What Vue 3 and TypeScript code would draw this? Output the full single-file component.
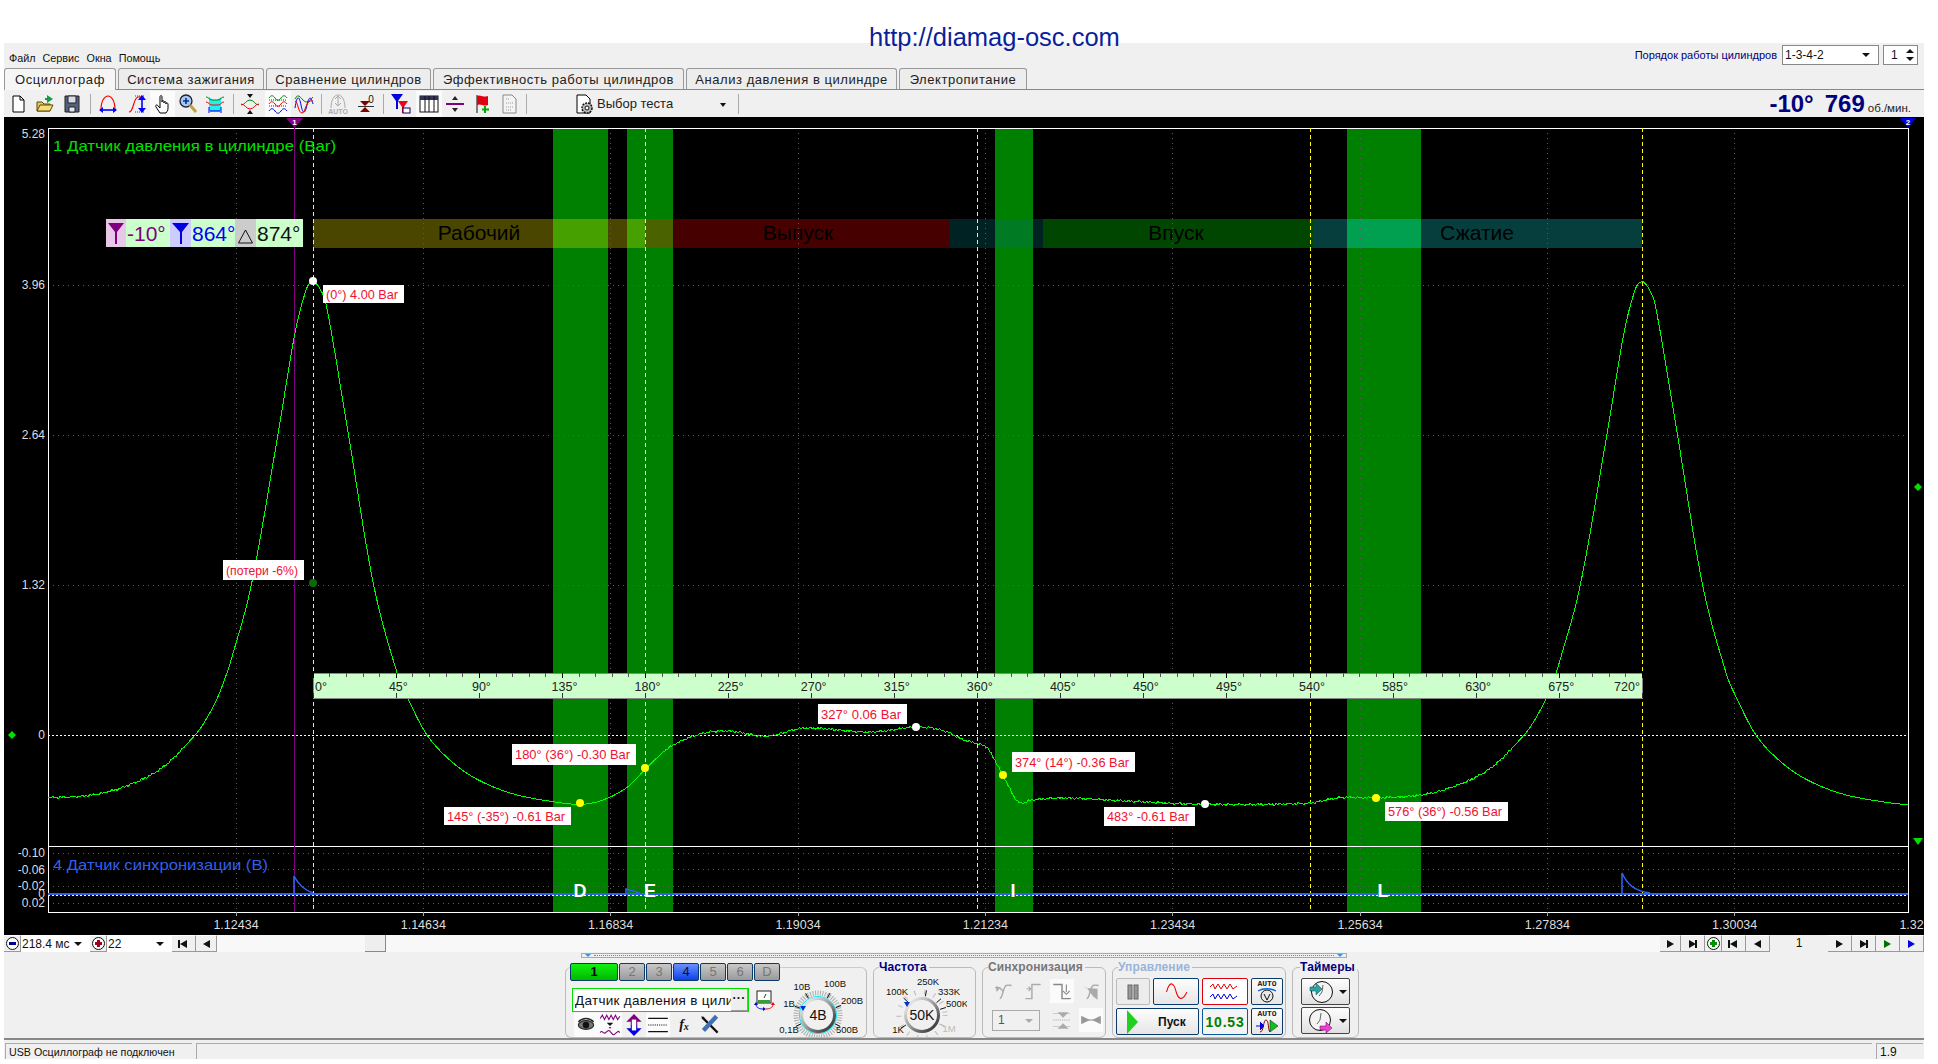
<script setup lang="ts">
// pressure table: crank degree -> Bar, read off the reference
const knots: [number, number][] = [
  [0, 4], [3.5, 3.93], [7.2, 3.77], [19, 2.647], [32.5, 1.335], [45.2, 0.557], [51, 0.33], [61.6, 0],
  [75, -0.235], [89.5, -0.396], [108.7, -0.52], [130, -0.587], [145, -0.61], [157, -0.572], [170.5, -0.455],
  [180, -0.3], [193, -0.108], [210, 0.01], [225, 0.035], [245.5, -0.01], [266, 0.06], [302, 0.026], [327, 0.07],
  [341, 0.04], [352, -0.04], [360.5, -0.08], [365, -0.11], [373.5, -0.35], [381.8, -0.587], [389, -0.572],
  [408, -0.555], [447, -0.587], [483, -0.61], [539, -0.6], [556, -0.552], [576, -0.552], [600, -0.528],
  [618.7, -0.449], [638, -0.29], [656, 0], [662, 0.14], [668, 0.326], [672.2, 0.5], [676, 0.69], [686.6, 1.335], [701, 2.66],
  [710.1, 3.54], [716.4, 3.93], [720, 4],
]
const X0 = 313.3
const PX_DEG = 1.8458
const Y0 = 735
const PX_BAR = 113.6

function slope(i: number) {
  const a = knots[Math.max(i - 1, 0)]
  const b = knots[Math.min(i + 1, knots.length - 1)]
  return (b[1] - a[1]) / (b[0] - a[0])
}
function bar(deg: number) {
  let i = 0
  while (i < knots.length - 2 && knots[i + 1][0] < deg) i++
  const [x1, y1] = knots[i]
  const [x2, y2] = knots[i + 1]
  const h = x2 - x1
  const t = (deg - x1) / h
  const t2 = t * t
  const t3 = t2 * t
  return (2 * t3 - 3 * t2 + 1) * y1 + (t3 - 2 * t2 + t) * h * slope(i) + (-2 * t3 + 3 * t2) * y2 + (t3 - t2) * h * slope(i + 1)
}
function buildCurve() {
  const pts: string[] = []
  for (let x = 48; x <= 1908; x++) {
    const deg = (((x - X0) / PX_DEG) % 720 + 720) % 720
    const wiggle = deg > 190 && deg < 650 ? 0.006 * Math.sin(x * 1.7) + 0.004 * Math.sin(x * 0.63) : 0
    pts.push(`${x},${(Y0 - (bar(deg) + wiggle) * PX_BAR).toFixed(1)}`)
  }
  return pts.join(' ')
}
const curve = buildCurve()

const greenBars = [[553, 55], [627, 46], [995, 38], [1347, 74]]
const bands = [
  { x: 313, w: 332, fill: '#4a4600', text: 'Рабочий', cx: 479 },
  { x: 645, w: 304, fill: '#470000', text: 'Выпуск', cx: 798 },
  { x: 949, w: 94, fill: '#002222', text: '', cx: 0 },
  { x: 1043, w: 270, fill: '#004500', text: 'Впуск', cx: 1176 },
  { x: 1313, w: 329, fill: '#063e3e', text: 'Сжатие', cx: 1477 },
]
const overlaps = [
  { x: 553, w: 55, fill: '#46a000' },
  { x: 627, w: 18, fill: '#46a000' },
  { x: 645, w: 28, fill: '#4a6200' },
  { x: 995, w: 38, fill: '#007b24' },
  { x: 1347, w: 74, fill: '#00a050' },
]
const gridX = [236, 423.3, 610.7, 798, 985.4, 1172.7, 1360, 1547.4, 1734.7]
const timeLabels = ['1.12434', '1.14634', '1.16834', '1.19034', '1.21234', '1.23434', '1.25634', '1.27834', '1.30034']
const yLabels = [
  { y: 134, t: '5.28' }, { y: 285, t: '3.96' }, { y: 435, t: '2.64' }, { y: 585, t: '1.32' }, { y: 735, t: '0' },
  { y: 853, t: '-0.10' }, { y: 869.5, t: '-0.06' }, { y: 886, t: '-0.02' }, { y: 894, t: '0' }, { y: 903, t: '0.02' },
]
const yellow = [313, 645, 977.5, 1310, 1642]
const ticks = Array.from({ length: 81 }, (_, i) => X0 + i * 9 * PX_DEG)
const rulerMarks = Array.from({ length: 17 }, (_, i) => i * 45)
const labels = [
  { x: 323, y: 285, w: 81, h: 18, t: '(0°) 4.00 Bar' },
  { x: 223, y: 560, w: 81, h: 20, t: '(потери -6%)' },
  { x: 512, y: 744, w: 124, h: 21, t: '180° (36°) -0.30 Bar' },
  { x: 444, y: 807, w: 127, h: 18, t: '145° (-35°) -0.61 Bar' },
  { x: 818, y: 704, w: 89, h: 20, t: '327° 0.06 Bar' },
  { x: 1012, y: 752, w: 123, h: 20, t: '374° (14°) -0.36 Bar' },
  { x: 1104, y: 807, w: 91, h: 19, t: '483° -0.61 Bar' },
  { x: 1385, y: 802, w: 123, h: 19, t: '576° (36°) -0.56 Bar' },
]
const dots = [
  { x: 313, y: 281, f: '#fff' }, { x: 313, y: 583, f: '#0a6a0a' }, { x: 580, y: 803, f: '#ff0' },
  { x: 645, y: 768, f: '#ff0' }, { x: 916, y: 727, f: '#fff' }, { x: 1003, y: 775, f: '#ff0' },
  { x: 1205, y: 804, f: '#fff' }, { x: 1376, y: 798, f: '#ff0' },
]

const tabs = [
  { t: 'Осциллограф', w: 112 }, { t: 'Система зажигания', w: 146 }, { t: 'Сравнение цилиндров', w: 165 },
  { t: 'Эффективность работы цилиндров', w: 251 }, { t: 'Анализ давления в цилиндре', w: 211 }, { t: 'Электропитание', w: 128 },
]

const icons: Record<string, string> = {
  new: '<path d="M6 3h7l4 4v12H6z" fill="#fff" stroke="#000"/><path d="M13 3v4h4" fill="none" stroke="#000"/>',
  open: '<path d="M3 18V9h5l2 2h6v7z" fill="#e8c860" stroke="#5a4a00"/><path d="M3 18l3-6h13l-3 6z" fill="#f4dc80" stroke="#5a4a00"/><path d="M13 2l6 4-6 4V7h-2V5h2z" fill="#10a040"/>',
  save: '<path d="M4 3h14v16H4z" fill="#556080" stroke="#222"/><path d="M7 3h8v7H7z" fill="#d8dce8" stroke="#222"/><path d="M8 14h6v5H8z" fill="#e8e8e8" stroke="#222"/>',
  arch: '<path d="M4 17C4 7 8 3 11 3s7 4 7 14" fill="none" stroke="#f00" stroke-width="1.2"/><path d="M5 17h12" stroke="#00f" stroke-width="1.6"/><path d="M2 17l4-3v6zM20 17l-4-3v6z" fill="#00f"/>',
  scurve: '<path d="M2 19c5 0 4-14 9-15h5" fill="none" stroke="#f00" stroke-width="1.2"/><path d="M8 3h10M8 19h10" stroke="#444" stroke-dasharray="1 1"/><path d="M15 6v11" stroke="#00f" stroke-width="1.6"/><path d="M15 2l4 5h-8zM15 20l4-5h-8z" fill="#00f"/>',
  hand: '<path d="M8 20l-4-6c-1-2 1-3 2-1l2 2V4c0-2 2-2 2 0v5c0-2 2-2 2 0v1c0-2 2-2 2 0v1c0-2 2-1 2 0v4c0 3-1 3-2 5z" fill="#fff" stroke="#000"/>',
  zoom: '<circle cx="9" cy="8" r="6" fill="#a8c8f0" stroke="#223"  stroke-width="1.3"/><path d="M6 8h6M9 5v6" stroke="#0030a0" stroke-width="1.6"/><path d="M13 12l6 7" stroke="#c0a040" stroke-width="3"/>',
  band: '<path d="M5 4l4 3h4l4-3v14H5z" fill="#20f0f0"/><path d="M2 4c3 0 3 3 6 3h6c3 0 3-3 6-3" fill="none" stroke="#080" /><path d="M2 9c3 0 3 3 6 3h6c3 0 3-3 6-3" fill="none" stroke="#f00"/><path d="M6 18h10" stroke="#00f" stroke-width="1.2"/><path d="M5 14v6M17 14v6" stroke="#00f"/>',
  cross: '<path d="M2 11c4 0 5-5 9-5s5 5 9 5" fill="none" stroke="#080" transform="translate(0 1)"/><path d="M2 11c4 0 5 5 9 5s5-5 9-5" fill="none" stroke="#e00"/><path d="M8 1h6l-3 4zM8 21h6l-3-4z" fill="#111"/>',
  waves: '<path d="M2 5c2-3 4-3 6 0s4 3 6 0 4-3 6 0" fill="none" stroke="#080"/><path d="M2 11c2-3 4-3 6 0s4 3 6 0 4-3 6 0" fill="none" stroke="#e00"/><path d="M2 18c2-3 4-3 6 0s4 3 6 0 4-3 6 0" fill="none" stroke="#00d"/><path d="M2 7h18M2 13h18" stroke="#333" stroke-dasharray="1 1"/>',
  sines: '<path d="M2 6c3-6 5-2 8 1s5 3 10-3" fill="none" stroke="#080"/><path d="M2 15C4 2 6 2 8 12s4 9 6 0 4-9 6-1" fill="none" stroke="#00d"/><path d="M2 8c3 0 3 12 7 12s3-14 11-12" fill="none" stroke="#e00"/>',
  auto: '<path d="M4 15C4 7 7 2 11 2s7 5 7 13" fill="none" stroke="#aaa"/><path d="M11 4v8" stroke="#aaa"/><path d="M8 6l3-3 3 3M8 10l3 3 3-3" fill="none" stroke="#aaa"/><text x="11" y="21" text-anchor="middle" font-family="Liberation Sans" font-size="7" font-weight="700" fill="#aaa">AUTO</text>',
  zero: '<path d="M5 8h10l-5 5zM5 19h10l-5-5z" fill="#800000"/><path d="M3 11h16" stroke="#333" transform="translate(0 2.5)"/><text x="16" y="10" text-anchor="middle" font-family="Liberation Sans" font-size="10" fill="#111">0</text>',
  cursors: '<path d="M2 1h12L9 8v8H7V8z" fill="#0000e0"/><path d="M9 8h10l-4 6v6h-2v-6z" fill="#f00020"/><rect x="14" y="15" width="7" height="5" fill="#fff" stroke="#005"/>',
  table: '<rect x="2" y="3" width="18" height="16" fill="#fff" stroke="#111"/><path d="M2 3h18v4H2z" fill="#335"/><path d="M7 3v16M11 3v16M16 3v16" stroke="#111"/>',
  level: '<path d="M2 11h18" stroke="#800080" stroke-width="2"/><path d="M8 7h6l-3-4zM8 15h6l-3 4z" fill="#222"/>',
  flag: '<path d="M6 2v18" stroke="#111"/><path d="M6 3c4-2 5 2 11 0v9c-5 2-7-2-11 0z" fill="#e00010"/><path d="M14 13v7M11 16.500h7" stroke="#0a0" stroke-width="2"/>',
  doc: '<path d="M5 2h9l4 4v14H5z" fill="#f4f4f4" stroke="#888"/><path d="M8 6h4M8 10h7M8 14h7M8 17h5" stroke="#999" stroke-dasharray="1 1"/>',
  test: '<path d="M4 2h9l4 4v14H4z" fill="#fff" stroke="#000"/><circle cx="14" cy="15" r="5" fill="#bbb" stroke="#111" stroke-dasharray="2 1" stroke-width="1.5"/><circle cx="14" cy="15" r="2" fill="#fff" stroke="#111"/>',
  eye: '<ellipse cx="11" cy="11" rx="7" ry="4" fill="#777" stroke="#222"/><circle cx="11" cy="11" r="3" fill="#111"/><path d="M4 8c4-4 10-4 14 0" fill="none" stroke="#222" stroke-width="1.5"/>',
  scale: '<path d="M2 5l2-3 2 4 2-4 2 4 2-4 2 4 2-4 2 4 2-3" fill="none" stroke="#800080"/><path d="M2 18c2-3 3 2 5 0s3-3 5 0 3 2 5 0 2-1 3 0" fill="none" stroke="#800080"/><path d="M8 9h6l-3 3zM10 13h2v1h-2z" fill="#111"/>',
  updown: '<path d="M11 1l7 7h-4v3H8V8H4z" fill="#800080"/><path d="M11 21l7-7h-4v-3H8v3H4z" fill="#0000e0"/><path d="M9 6h4v10H9z" fill="#fff"/>',
  lines: '<path d="M2 5h18M2 17h18" stroke="#111" stroke-width="1.2"/><path d="M2 11h18" stroke="#111" stroke-dasharray="1 1"/>',
  tools: '<path d="M4 4l14 14" stroke="#111" stroke-width="2"/><path d="M17 3L5 16" stroke="#4070b0" stroke-width="4"/><path d="M3 3l3 1-2 2z" fill="#111"/>',
  gauge: '<rect x="4" y="2" width="14" height="12" fill="#fff" stroke="#222"/><path d="M5 11h12v3H5z" fill="#3a9a3a"/><path d="M11 9l2-4" stroke="#333"/><path d="M3 15c0 4 4 5 7 5" fill="none" stroke="#00c"/><path d="M20 15c0 4-4 5-7 5" fill="none" stroke="#e00"/><path d="M1 16h4l-2-3zM10 18v4l3-2z" fill="#00c"/><path d="M18 16h4l-2-3z" fill="#e00"/>',
  sine: '<path d="M3 11C7-2 12 3 14 10s7 12 13 1" transform="scale(.85 1)" fill="none" stroke="#e00" stroke-width="1.2"/>',
  pause: '<rect x="6" y="4" width="4" height="14" fill="#999" stroke="#666"/><rect x="12" y="4" width="4" height="14" fill="#999" stroke="#666"/>',
  syncA: '<path d="M3 8h4l3 3M7 18c3 0 3-11 6-12s3 0 5 0" fill="none" stroke="#aaa" stroke-width="1.3"/><path d="M4 6l3 3-3 3z" fill="#aaa"/>',
  syncB: '<path d="M4 18h6V5h8" fill="none" stroke="#aaa" stroke-width="1.3"/><path d="M5 9h4M7 7l2 2-2 2" fill="none" stroke="#aaa"/>',
  syncC: '<path d="M3 5h8v13h8" fill="none" stroke="#888" stroke-width="1.3"/><path d="M15 5v7M12 11l3 3 3-3" fill="none" stroke="#888"/>',
  syncD: '<path d="M3 8h4l6 8 4 3V9z" fill="#aaa"/><path d="M7 18c3 0 3-11 6-12s3 0 5 0" fill="none" stroke="#aaa" stroke-width="1.3"/>',
  syncE: '<path d="M3 5h15M3 11h15M3 17h15" stroke="#aaa" stroke-dasharray="1 1"/><path d="M7 4h10l-5 5zM7 19h10l-5-5z" fill="#aaa"/>',
  syncF: '<path d="M2 7l8 4-8 4zM20 7l-8 4 8 4z" fill="#999"/><path d="M2 11h18" stroke="#999"/>',
}

const toolbar = [
  { i: 'new', w: 26 }, { i: 'open', w: 27 }, { i: 'save', w: 27 }, { i: '', w: 10 },
  { i: 'arch', w: 25 }, { i: '', w: 5 }, { i: 'scurve', w: 25 }, { i: 'hand', w: 25, on: true }, { i: 'zoom', w: 25 }, { i: '', w: 2 }, { i: 'band', w: 26 },
  { i: '', w: 9 }, { i: 'cross', w: 26 }, { i: '', w: 2 }, { i: 'waves', w: 26, on: true }, { i: 'sines', w: 26 }, { i: '', w: 8 },
  { i: 'auto', w: 26 }, { i: '', w: 2 }, { i: 'zero', w: 26 }, { i: '', w: 8 }, { i: 'cursors', w: 26 }, { i: '', w: 3 },
  { i: 'table', w: 26, on: true }, { i: 'level', w: 26 }, { i: 'flag', w: 27 }, { i: 'doc', w: 27 }, { i: '', w: 8 },
]
const channels = [
  { t: '1', c: 'on' }, { t: '2', c: '' }, { t: '3', c: '' }, { t: '4', c: 'blue' }, { t: '5', c: '' }, { t: '6', c: '' }, { t: 'D', c: '' },
]
const knobA = [
  { x: -29, y: 15, t: '0,1В' }, { x: -29, y: -11, t: '1В' }, { x: -16, y: -28, t: '10В' },
  { x: 17, y: -31, t: '100В' }, { x: 34, y: -14, t: '200В' }, { x: 29, y: 15, t: '500В' },
]
const knobB = [
  { x: -24, y: 15, t: '1K', g: false }, { x: -25, y: -23, t: '100K', g: false }, { x: 6, y: -33, t: '250K', g: false },
  { x: 27, y: -23, t: '333K', g: false }, { x: 35, y: -11, t: '500K', g: false }, { x: 27, y: 14, t: '1M', g: true },
]
// short radial mark between the dial ring and its caption
function knobTick(k: { x: number; y: number }) {
  const len = Math.hypot(k.x, k.y)
  const ux = k.x / len
  const uy = k.y / len
  return { x1: ux * 19, y1: uy * 19, x2: ux * 25, y2: uy * 25 }
}
</script>

<template>
  <div class="title">http://diamag-osc.com</div>
  <div class="app">
    <div class="menubar">
      <span>Файл</span><span>Сервис</span><span>Окна</span><span>Помощь</span>
      <div class="cyl">
        <span class="cyl-label">Порядок работы цилиндров</span>
        <div class="cyl-select">1-3-4-2<i class="down"></i></div>
        <div class="cyl-spin">1<b><i class="up"></i><i class="down"></i></b></div>
      </div>
    </div>

    <div class="tabs">
      <div v-for="(t, i) in tabs" :key="t.t" class="tab" :class="{ active: i === 0 }" :style="{ width: t.w + 'px' }">{{ t.t }}</div>
    </div>

    <div class="toolbar">
      <template v-for="(b, i) in toolbar" :key="i">
        <div v-if="b.i" class="tool" :class="{ on: b.on }" :style="{ width: b.w + 'px' }">
          <svg width="22" height="22" viewBox="0 0 22 22" v-html="icons[b.i]"></svg>
        </div>
        <div v-else class="gap" :class="{ sep: b.w > 6 }" :style="{ width: b.w + 'px' }"></div>
      </template>
      <div class="test">
        <svg width="22" height="22" viewBox="0 0 22 22" v-html="icons.test"></svg>
        <span>Выбор теста</span>
        <i class="down"></i>
      </div>
      <div class="gap sep test-sep"></div>
      <div class="rpm"><b>-10°</b><b class="rpm-val">769</b><span>об./мин.</span></div>
    </div>

    <svg class="chart" width="1920" height="818" viewBox="4 117 1920 818" font-family="Liberation Sans, Arial, sans-serif">
      <rect x="4" y="117" width="1920" height="818" fill="#000" />
      <rect v-for="g in greenBars" :key="g[0]" :x="g[0]" y="128" :width="g[1]" height="784" fill="#008000" />

      <rect v-for="b in bands" :key="b.x" :x="b.x" y="219" :width="b.w" height="29" :fill="b.fill" />
      <rect v-for="o in overlaps" :key="o.x" :x="o.x" y="219" :width="o.w" height="29" :fill="o.fill" />
      <template v-for="b in bands" :key="b.x">
        <text v-if="b.text" :x="b.cx" y="240" text-anchor="middle" font-size="21" fill="#000">{{ b.text }}</text>
      </template>

      <g stroke="#5c5c5c" stroke-dasharray="1 4" shape-rendering="crispEdges">
        <line v-for="x in gridX" :key="x" :x1="x" :x2="x" y1="128" y2="912" />
        <line x1="48" x2="1908" y1="285" y2="285" />
        <line x1="48" x2="1908" y1="435" y2="435" />
        <line x1="48" x2="1908" y1="585" y2="585" />
        <line x1="48" x2="1908" y1="853" y2="853" />
        <line x1="48" x2="1908" y1="869.500" y2="869.500" />
        <line x1="48" x2="1908" y1="886" y2="886" />
        <line x1="48" x2="1908" y1="903" y2="903" />
      </g>
      <line x1="48" x2="1908" y1="735" y2="735" stroke="#fff" stroke-dasharray="2 2" shape-rendering="crispEdges" />
      <line x1="48" x2="1908" y1="895" y2="895" stroke="#fff" stroke-dasharray="2 2" shape-rendering="crispEdges" />

      <rect x="48" y="128" width="1860" height="784" fill="none" stroke="#fff" shape-rendering="crispEdges" />
      <line x1="48" x2="1908" y1="846" y2="846" stroke="#fff" shape-rendering="crispEdges" />

      <line v-for="x in yellow" :key="x" :x1="x" :x2="x" y1="128" y2="912" stroke="#ff0" stroke-dasharray="4 3" shape-rendering="crispEdges" />
      <line x1="294.500" x2="294.500" y1="128" y2="912" stroke="#800080" shape-rendering="crispEdges" />

      <polygon points="286,118 303,118 294.500,128" fill="#800080" />
      <text x="294.500" y="125" text-anchor="middle" font-size="8" font-weight="700" fill="#fff">1</text>
      <polygon points="1900,118 1916,118 1908,128" fill="#0000e0" />
      <text x="1908" y="125" text-anchor="middle" font-size="8" font-weight="700" fill="#fff">2</text>

      <polyline :points="curve" fill="none" stroke="#00ff00" shape-rendering="crispEdges" />

      <path d="M294 894V876C298 884 304 890 313 893M626 893V889L640 893M1622 893V873C1627 884 1634 891 1650 893" fill="none" stroke="#2f5fef" stroke-width="1.600" />
      <path d="M48 894H1908" stroke="#2f5fef" stroke-width="2" />

      <text x="53" y="151" font-size="15" fill="#00e000" textLength="283" lengthAdjust="spacingAndGlyphs">1 Датчик давления в цилиндре (Bar)</text>
      <text x="53" y="870" font-size="15" fill="#2f5fef" textLength="215" lengthAdjust="spacingAndGlyphs">4 Датчик синхронизации (В)</text>

      <g font-size="18" font-weight="700" fill="#fff" text-anchor="middle">
        <text x="580" y="897">D</text>
        <text x="650" y="897">E</text>
        <text x="1013" y="897">I</text>
        <text x="1383" y="897">L</text>
      </g>

      <!-- degree ruler -->
      <rect x="313" y="673" width="1329" height="25" fill="#ccffcc" stroke="#888" shape-rendering="crispEdges" />
      <g stroke="#555" shape-rendering="crispEdges">
        <line v-for="x in ticks" :key="x" :x1="x" :x2="x" y1="673" y2="677" />
      </g>
      <g v-for="d in rulerMarks" :key="d">
        <line :x1="X0 + d * PX_DEG" :x2="X0 + d * PX_DEG" y1="673" y2="678" stroke="#000" shape-rendering="crispEdges" />
        <line :x1="X0 + d * PX_DEG" :x2="X0 + d * PX_DEG" y1="693" y2="698" stroke="#333" shape-rendering="crispEdges" />
        <text :x="d === 0 ? 321 : d === 720 ? 1627 : X0 + d * PX_DEG + 2" y="691" text-anchor="middle" font-size="12.500" fill="#222">{{ d }}°</text>
      </g>

      <g v-for="l in labels" :key="l.t">
        <rect :x="l.x" :y="l.y" :width="l.w" :height="l.h" fill="#fff" />
        <text :x="l.x + 3" :y="l.y + l.h / 2 + 4.500" font-size="13" fill="#f01030" :textLength="l.w - 9" lengthAdjust="spacingAndGlyphs">{{ l.t }}</text>
      </g>
      <circle v-for="d in dots" :key="d.x + d.f" :cx="d.x" :cy="d.y" r="4" :fill="d.f" />

      <!-- cursor legend -->
      <rect x="106" y="219" width="20" height="28" fill="#e8c8e8" />
      <rect x="126" y="219" width="44" height="28" fill="#ccffcc" />
      <rect x="170" y="219" width="21" height="28" fill="#ccccff" />
      <rect x="191" y="219" width="44" height="28" fill="#ccffcc" />
      <rect x="235" y="219" width="21" height="28" fill="#cccccc" />
      <rect x="256" y="219" width="47" height="28" fill="#ccffcc" />
      <path d="M108 223h16l-7 9v12h-2v-12z" fill="#800080" />
      <path d="M172 223h17l-7 9v12h-2v-12z" fill="#0000e0" />
      <path d="M245.500 230l7 13h-14z" fill="none" stroke="#111" />
      <g font-size="21">
        <text x="127" y="241" fill="#800080">-10°</text>
        <text x="192" y="241" fill="#0000ff">864°</text>
        <text x="257" y="241" fill="#111">874°</text>
      </g>

      <g font-size="12" fill="#ddd" text-anchor="end">
        <text v-for="y in yLabels" :key="y.t + y.y" x="45" :y="y.y + 4">{{ y.t }}</text>
      </g>
      <g font-size="12.500" fill="#ddd" text-anchor="middle">
        <text v-for="(t, i) in timeLabels" :key="t" :x="gridX[i]" y="929">{{ t }}</text>
        <text x="1922" y="929">1.32234</text>
      </g>
      <g stroke="#aaa" shape-rendering="crispEdges">
        <line v-for="x in gridX" :key="x" :x1="x" :x2="x" y1="912" y2="916" />
      </g>

      <path d="M12 731l4 4-4 4-4-4z" fill="#00e000" />
      <path d="M1918 483l4 4-4 4-4-4z" fill="#00e000" />
      <path d="M1913 838h10l-5 7z" fill="#00e000" />
    </svg>

    <div class="scrollrow">
      <div class="btn small"><span class="round minus"></span></div>
      <div class="combo-mini w1">218.4 мс<i class="down"></i></div>
      <div class="btn small"><span class="round plus-r"></span></div>
      <div class="combo-mini w2">22<i class="down"></i></div>
      <div class="btn nav"><i class="tri-l bar-l"></i></div>
      <div class="btn n2"><i class="tri-l"></i></div>
      <div class="track"><div class="thumb"></div></div>
      <div class="btn n2"><i class="tri-r"></i></div>
      <div class="btn nav"><i class="tri-r bar-r"></i></div>
      <div class="btn small"><span class="round plus-g"></span></div>
      <div class="btn nav"><i class="tri-l bar-l"></i></div>
      <div class="btn nav"><i class="tri-l"></i></div>
      <div class="page">1</div>
      <div class="btn nav"><i class="tri-r"></i></div>
      <div class="btn nav"><i class="tri-r bar-r"></i></div>
      <div class="btn nav"><i class="tri-r green"></i></div>
      <div class="btn nav"><i class="tri-r blue"></i></div>
    </div>

    <div class="bottom">
      <div class="slider"><i class="mark"></i><span class="dots"></span><i class="mark"></i></div>
      <div class="groups">
        <section class="group g-channel">
          <div class="col">
            <div class="chans">
              <div v-for="c in channels" :key="c.t" class="chan" :class="c.c">{{ c.t }}</div>
            </div>
            <div class="sensor">
              <div class="sensor-box"><span>Датчик давления в цилиндре</span><em>···</em></div>
              <svg width="22" height="22" viewBox="0 0 22 22" v-html="icons.gauge"></svg>
            </div>
            <div class="tiny-tools">
              <svg class="sel" width="24" height="24" viewBox="0 0 22 22" v-html="icons.eye"></svg>
              <svg class="sel" width="24" height="24" viewBox="0 0 22 22" v-html="icons.scale"></svg>
              <svg width="24" height="24" viewBox="0 0 22 22" v-html="icons.updown"></svg>
              <svg class="sel" width="24" height="24" viewBox="0 0 22 22" v-html="icons.lines"></svg>
              <span class="fx">f<sub>x</sub></span>
              <svg width="24" height="24" viewBox="0 0 22 22" v-html="icons.tools"></svg>
            </div>
          </div>
          <svg class="knob knob-a" width="90" height="62" viewBox="-45 -40 90 62" font-family="Liberation Sans, sans-serif">
            <defs>
              <linearGradient id="ringA" x1="0" y1="0" x2="1" y2="1">
                <stop offset="0" stop-color="#fff" /><stop offset="0.5" stop-color="#999" /><stop offset="1" stop-color="#222" />
              </linearGradient>
            </defs>
            <circle r="22" fill="none" stroke="#aaa" stroke-width="5" stroke-dasharray="1 1.500" />
            <line v-for="k in knobA" :key="k.t" v-bind="knobTick(k)" stroke="#111" />
            <circle r="18.500" fill="#f0f0f0" stroke="#20e8f0" stroke-width="1.200" />
            <circle r="16.500" fill="#f0f0f0" stroke="url(#ringA)" stroke-width="3" />
            <path d="M-18-9h6l-3 5z" fill="#0030d0" />
            <text y="5" text-anchor="middle" font-size="14" fill="#111">4В</text>
            <text v-for="k in knobA" :key="k.t" :x="k.x" :y="k.y + 3" text-anchor="middle" font-size="9.500" fill="#111">{{ k.t }}</text>
          </svg>
        </section>

        <section class="group g-freq">
          <h4 class="navy">Частота</h4>
          <svg class="knob knob-b" width="90" height="62" viewBox="-45 -40 90 62" font-family="Liberation Sans, sans-serif">
            <defs>
              <linearGradient id="ringB" x1="0" y1="0" x2="1" y2="1">
                <stop offset="0" stop-color="#fff" /><stop offset="0.5" stop-color="#999" /><stop offset="1" stop-color="#222" />
              </linearGradient>
            </defs>
            <circle r="23" fill="none" stroke="#bbb" stroke-width="5" stroke-dasharray="1 9" />
            <line v-for="k in knobB" :key="k.t" v-bind="knobTick(k)" :stroke="k.g ? '#bbb' : '#111'" />
            <circle r="16.500" fill="#f0f0f0" stroke="url(#ringB)" stroke-width="3" />
            <path d="M-18-13h6l-3 5z" fill="#0030d0" />
            <text y="5" text-anchor="middle" font-size="14" fill="#111">50K</text>
            <text v-for="k in knobB" :key="k.t" :x="k.x" :y="k.y + 3" text-anchor="middle" font-size="9.500" :fill="k.g ? '#bbb' : '#111'">{{ k.t }}</text>
          </svg>
        </section>

        <section class="group g-sync">
          <h4 class="grey">Синхронизация</h4>
          <div class="sync-grid">
            <svg width="24" height="24" viewBox="0 0 22 22" v-html="icons.syncA"></svg>
            <svg width="24" height="24" viewBox="0 0 22 22" v-html="icons.syncB"></svg>
            <svg class="sel" width="24" height="24" viewBox="0 0 22 22" v-html="icons.syncC"></svg>
            <svg width="24" height="24" viewBox="0 0 22 22" v-html="icons.syncD"></svg>
            <div class="sync-sel">1<i class="down grey-down"></i></div>
            <svg width="24" height="24" viewBox="0 0 22 22" v-html="icons.syncE"></svg>
            <svg class="sel" width="24" height="24" viewBox="0 0 22 22" v-html="icons.syncF"></svg>
          </div>
        </section>

        <section class="group g-ctrl">
          <h4 class="pale">Управление</h4>
          <div class="ctrl-grid">
            <div class="cbtn pause"><svg width="22" height="22" viewBox="0 0 22 22" v-html="icons.pause"></svg></div>
            <div class="cbtn"><svg width="30" height="22" viewBox="0 0 24 22" v-html="icons.sine"></svg></div>
            <div class="cbtn red-b">
              <svg width="34" height="22" viewBox="0 0 34 22">
                <path d="M2 6l3-3 2 5 3-5 3 5 3-5 3 5 3-5 3 5 4-3" fill="none" stroke="#e00" />
                <path d="M2 16l3-3 2 5 3-5 3 5 3-5 3 5 3-5 3 5 4-3" fill="none" stroke="#00d" />
              </svg>
            </div>
            <div class="cbtn mini-auto">
              <span>AUTO</span>
              <svg width="20" height="15" viewBox="0 0 20 15"><circle cx="10" cy="8" r="6" fill="#e8e8e8" stroke="#111" /><path d="M7 6l3 6 3-6" fill="none" stroke="#111" /><path d="M1 3c5-3 13-3 18 0" fill="none" stroke="#06d" stroke-width="1.400" /></svg>
            </div>
            <div class="cbtn start"><i class="play"></i><b>Пуск</b></div>
            <div class="cbtn value">10.53</div>
            <div class="cbtn mini-auto">
              <span>AUTO</span>
              <svg width="24" height="15" viewBox="0 0 24 15"><path d="M1 8h7M5 4l4 4-4 4" fill="#00d" stroke="#00d" /><path d="M5 14c4 0 3-12 6-12s2 11 4 12" fill="none" stroke="#800" /><path d="M15 2l8 6-8 6z" fill="#10c020" stroke="#111" stroke-width=".5" /></svg>
            </div>
          </div>
        </section>

        <section class="group g-timer">
          <h4 class="navy">Таймеры</h4>
          <div class="tbtn">
            <svg width="26" height="24" viewBox="0 0 26 24"><circle cx="14" cy="12" r="10.500" fill="#f4f4f4" stroke="#111" /><path d="M14 12l1-7M14 12l-3 4" stroke="#666" /><path d="M2 7h6V3l6 6-6 6v-4H2z" fill="#30a0a0" stroke="#055" stroke-width=".5" /></svg>
            <i class="down"></i>
          </div>
          <div class="tbtn">
            <svg width="26" height="24" viewBox="0 0 26 24"><circle cx="12" cy="11" r="10.500" fill="#f4f4f4" stroke="#111" /><path d="M12 11l1-7M12 11l-3 4" stroke="#666" /><path d="M12 17h6v-4l6 6-6 5v-3h-6z" fill="#f040d0" stroke="#505" stroke-width=".5" /></svg>
            <i class="down"></i>
          </div>
        </section>
      </div>
    </div>

    <div class="status">
      <div class="cell c1">USB Осциллограф не подключен</div>
      <div class="cell c2"></div>
      <div class="cell c3">1.9</div>
    </div>
  </div>
</template>

<style>
html, body {
  margin: 0;
  background: #fff;
}
</style>

<style scoped>
.title {
  position: absolute;
  top: 23px;
  left: 869px;
  font: 25.500px "Liberation Sans", Arial, sans-serif;
  color: #0a1f9a;
}

.app {
  margin: 43px 0 0 4px;
  width: 1920px;
  height: 1016px;
  display: flex;
  flex-direction: column;
  background: #f0f0f0;
  font-family: "Liberation Sans", Arial, sans-serif;
  color: #111;
  overflow: hidden;
}

i { display: inline-block; }

.down, .up {
  width: 0;
  height: 0;
  border-left: 4px solid transparent;
  border-right: 4px solid transparent;
}
.down { border-top: 4px solid #111; }
.up { border-bottom: 4px solid #111; }

/* menu */
.menubar {
  height: 25px;
  flex: none;
  display: flex;
  align-items: flex-start;
  gap: 7px;
  padding-left: 5px;
  font-size: 10.800px;
  line-height: 31px;
}
.cyl {
  margin-left: auto;
  margin-right: 6px;
  display: flex;
  align-items: center;
  height: 22px;
  margin-top: 1px;
  line-height: 20px;
}
.cyl-label {
  color: #00007c;
  margin-right: 5px;
  font-size: 11px;
}
.cyl-select {
  width: 97px;
  height: 20px;
  box-sizing: border-box;
  border: 1px solid #888;
  background: #fff;
  padding-left: 2px;
  display: flex;
  align-items: center;
  justify-content: space-between;
  padding-right: 8px;
  font-size: 12px;
}
.cyl-spin {
  width: 35px;
  height: 20px;
  box-sizing: border-box;
  margin-left: 4px;
  border: 1px solid #888;
  background: #fff;
  padding-left: 7px;
  display: flex;
  align-items: center;
  justify-content: space-between;
  padding-right: 3px;
  font-size: 12px;
}
.cyl-spin b {
  display: flex;
  flex-direction: column;
  gap: 4px;
}

/* tabs */
.tabs {
  height: 21px;
  flex: none;
  display: flex;
  gap: 2px;
  padding-left: 0;
}
.tab {
  box-sizing: border-box;
  border: 1px solid #999;
  border-bottom: none;
  border-radius: 3px 3px 0 0;
  background: #ededed;
  text-align: center;
  font-size: 13px;
  letter-spacing: 0.55px;
  line-height: 21px;
  white-space: nowrap;
  overflow: hidden;
  color: #222;
}
.tab.active {
  background: #f6f6f6;
  position: relative;
  z-index: 1;
  height: 22px;
}

/* toolbar */
.toolbar {
  height: 28px;
  flex: none;
  box-sizing: border-box;
  display: flex;
  align-items: center;
  padding-left: 1px;
  border-top: 1px solid #888;
}
.tool {
  height: 26px;
  display: flex;
  align-items: center;
  justify-content: center;
  flex: none;
}
.tool.on { background: #fbfbfb; }
.gap { height: 24px; flex: none; position: relative; }
.sep::after {
  content: "";
  position: absolute;
  left: 50%;
  top: 2px;
  bottom: 2px;
  width: 1px;
  background: #aaa;
}
.test {
  width: 161px;
  margin-left: 43px;
  display: flex;
  align-items: center;
  gap: 2px;
  font-size: 13px;
  color: #222;
  flex: none;
  padding-right: 5px;
  box-sizing: border-box;
  position: relative;
}
.test .down {
  position: absolute;
  right: 8px;
  top: 10px;
  border-left-width: 3px;
  border-right-width: 3px;
}
.test-sep { width: 8px; }
.rpm {
  margin-left: auto;
  margin-right: 13px;
  display: flex;
  align-items: baseline;
  color: #00007c;
  font-size: 24px;
}
.rpm-val { margin: 0 3px 0 11px; }
.rpm span { font-size: 11.500px; color: #222; }

.chart { display: block; flex: none; }

/* nav row under the chart */
.scrollrow {
  height: 17px;
  flex: none;
  display: flex;
  align-items: stretch;
  background: #fff;
  font-size: 12px;
}
.btn {
  flex: none;
  box-sizing: border-box;
  background: #f0f0f0;
  border-right: 1px solid #999;
  border-bottom: 1px solid #999;
  border-top: 1px solid #fff;
  display: flex;
  align-items: center;
  justify-content: center;
}
.small { width: 17px; }
.nav { width: 24px; }
.n2 { width: 21px; }
.round {
  width: 13px;
  height: 13px;
  box-sizing: border-box;
  border: 1px solid #111;
  border-radius: 50%;
  position: relative;
  background: #fff;
}
.round::after {
  content: "";
  position: absolute;
  left: 2px;
  right: 2px;
  top: 4px;
  height: 3px;
}
.plus-r::before, .plus-g::before {
  content: "";
  position: absolute;
  top: 2px;
  bottom: 2px;
  left: 4px;
  width: 3px;
}
.minus::after { background: #000090; }
.plus-r::after, .plus-r::before { background: #a00020; }
.plus-g::after, .plus-g::before { background: #009000; }
.combo-mini {
  flex: none;
  box-sizing: border-box;
  padding: 0 8px 0 1px;
  display: flex;
  align-items: center;
  justify-content: space-between;
  background: #fff;
}
.combo-mini .down { border-left-width: 4px; border-right-width: 4px; }
.w1 { width: 69px; }
.w2 { width: 65px; }
.track {
  flex: 1;
  background: #f8f8f8;
  position: relative;
}
.thumb {
  position: absolute;
  left: 148px;
  top: 0;
  width: 20px;
  height: 16px;
  background: #eee;
  border-right: 1px solid #888;
  border-bottom: 1px solid #888;
}
.page {
  width: 58px;
  flex: none;
  background: #f0f0f0;
  text-align: center;
  line-height: 17px;
}
.tri-l, .tri-r {
  width: 0;
  height: 0;
  border-top: 4px solid transparent;
  border-bottom: 4px solid transparent;
  position: relative;
}
.tri-l { border-right: 7px solid #111; }
.tri-r { border-left: 7px solid #111; }
.tri-r.green { border-left-color: #007000; }
.tri-r.blue { border-left-color: #0000e0; }
.bar-l::before, .bar-r::before {
  content: "";
  position: absolute;
  top: -4px;
  width: 2px;
  height: 8px;
  background: #111;
}
.bar-l::before { left: -2px; }
.bar-r::before { left: -1px; }

/* lower control panel */
.bottom {
  height: 88px;
  flex: none;
  position: relative;
  box-sizing: border-box;
  border-bottom: 2px solid #888;
}
.slider {
  position: absolute;
  left: 577px;
  top: 1px;
  width: 766px;
  height: 5px;
  box-sizing: border-box;
  border: 1px solid #aaa;
  display: flex;
  align-items: center;
  padding: 0 3px;
  gap: 3px;
}
.slider .dots {
  flex: 1;
  border-top: 1px dotted #4a90e0;
}
.slider .mark {
  width: 0;
  height: 0;
  border-left: 3px solid transparent;
  border-right: 3px solid transparent;
  border-top: 3px solid #3a90f0;
}
.groups {
  position: absolute;
  left: 561px;
  top: 15px;
  display: flex;
  gap: 6px;
}
.group {
  position: relative;
  height: 71px;
  box-sizing: border-box;
  border: 1px solid #bbb;
  border-radius: 6px;
}
.group h4 {
  position: absolute;
  margin: 0;
  top: -7px;
  left: 5px;
  padding-right: 2px;
  background: #f0f0f0;
  font-size: 12px;
  line-height: 13px;
  letter-spacing: 0.1px;
}
.g-timer h4 { left: 7px; }
.navy { color: #00007c; }
.grey { color: #777; }
.pale { color: #9ab4d8; }

.g-channel {
  width: 302px;
  display: flex;
  justify-content: space-between;
  border-top-color: #ccc;
}
.col {
  width: 205px;
  flex: none;
  box-sizing: border-box;
  padding-left: 4px;
  margin-top: -5px;
}
.chans {
  display: flex;
  gap: 1px;
  height: 18px;
}
.chan {
  flex: none;
  width: 26px;
  box-sizing: border-box;
  text-align: center;
  border: 1px solid #0a3a6a;
  border-radius: 2px;
  background: linear-gradient(#c8c8c8, #9a9a9a);
  color: #777;
  font-size: 13px;
  line-height: 16px;
}
.chan.on {
  width: 48px;
  background: linear-gradient(#10f010, #00b800);
  color: #000;
  font-weight: 700;
}
.chan.blue {
  background: linear-gradient(#6a90ff, #1040e8);
  color: #111;
}
.sensor {
  display: flex;
  align-items: center;
  gap: 4px;
  margin: 7px 0 0 2px;
}
.sensor-box {
  width: 177px;
  height: 24px;
  flex: none;
  box-sizing: border-box;
  border: 1px solid #00e000;
  background: #fff;
  display: flex;
  align-items: center;
  overflow: hidden;
  font-size: 13.500px;
  letter-spacing: 0.3px;
  padding-left: 2px;
}
.sensor-box span {
  flex: 1;
  white-space: nowrap;
  overflow: hidden;
}
.sensor-box em {
  width: 17px;
  height: 22px;
  flex: none;
  box-sizing: border-box;
  background: #eee;
  border-right: 1px solid #999;
  border-bottom: 1px solid #999;
  text-align: center;
  font: 700 12px/18px "Liberation Sans", sans-serif;
}
.sensor svg { flex: none; }
.tiny-tools {
  display: flex;
  align-items: center;
  gap: 0;
  margin-top: 1px;
  padding-left: 4px;
}
.tiny-tools svg { display: block; }
.sel { background: #fbfbfb; }
.fx {
  width: 28px;
  text-align: center;
  font: italic 700 14px "Liberation Serif", serif;
}
.fx sub { font-size: 10px; vertical-align: -1px; }
.knob { flex: none; margin-top: 7px; }
.knob-a { margin-right: 3px; }
.knob-b { margin-right: 5px; }

.g-freq { width: 103px; display: flex; justify-content: center; }
.g-sync { width: 124px; }
.sync-grid {
  display: grid;
  grid-template-columns: 29px 29px 29px 24px;
  grid-template-rows: 24px 24px;
  gap: 5px 0;
  padding: 11px 0 0 9px;
}
.sync-sel {
  grid-column: span 2;
  width: 48px;
  height: 21px;
  margin: 2px 0 0 0;
  box-sizing: border-box;
  border: 1px solid #aaa;
  font-size: 12px;
  line-height: 19px;
  padding: 0 6px 0 5px;
  color: #555;
  display: flex;
  align-items: center;
  justify-content: space-between;
}
.grey-down { border-top-color: #aaa; }

.g-ctrl { width: 174px; }
.ctrl-grid {
  display: grid;
  grid-template-columns: 34px 46px 46px 32px;
  grid-template-rows: 27px 27px;
  gap: 3px 3px;
  padding: 10px 0 0 3px;
}
.cbtn {
  box-sizing: border-box;
  border: 1px solid #0a3a6a;
  border-radius: 2px;
  background: linear-gradient(#fdfdfd, #e6e6e6);
  display: flex;
  align-items: center;
  justify-content: center;
}
.cbtn.pause { border-color: #bbb; background: #ececec; }
.red-b { border-color: #e00010; background: #fff; }
.mini-auto {
  flex-direction: column;
  line-height: 8px;
}
.mini-auto span {
  font: 700 8px/8px "Liberation Mono", monospace;
  color: #222;
}
.start {
  grid-column: span 2;
  justify-content: flex-start;
  font-size: 12px;
  padding-left: 10px;
}
.start b { margin-left: 20px; }
.play {
  width: 0;
  height: 0;
  border-top: 12px solid transparent;
  border-bottom: 12px solid transparent;
  border-left: 11px solid #20d020;
}
.value {
  font: 700 14px "Liberation Sans", sans-serif;
  letter-spacing: 0.8px;
  color: #008000;
  background: #f4f4f4;
  border-color: #0a5aa0;
}

.g-timer {
  width: 67px;
  padding: 10px 0 0 8px;
  display: flex;
  flex-direction: column;
  gap: 2px;
}
.tbtn {
  width: 49px;
  height: 27px;
  flex: none;
  box-sizing: border-box;
  border: 1px solid #444;
  border-radius: 2px;
  background: linear-gradient(#fdfdfd, #e0e0e0);
  display: flex;
  align-items: center;
  gap: 5px;
  padding-left: 6px;
}
.tbtn .down { border-left-width: 4px; border-right-width: 4px; }

/* status bar */
.status {
  flex: 1;
  display: flex;
  gap: 4px;
  padding: 3px 1px 0;
  font-size: 10.700px;
  line-height: 17px;
}
.cell {
  box-sizing: border-box;
  border-top: 1px solid #aaa;
  border-left: 1px solid #aaa;
  padding-left: 3px;
}
.c1 { width: 187px; }
.c2 { flex: 1; }
.c3 { width: 47px; font-size: 12px; }
</style>
